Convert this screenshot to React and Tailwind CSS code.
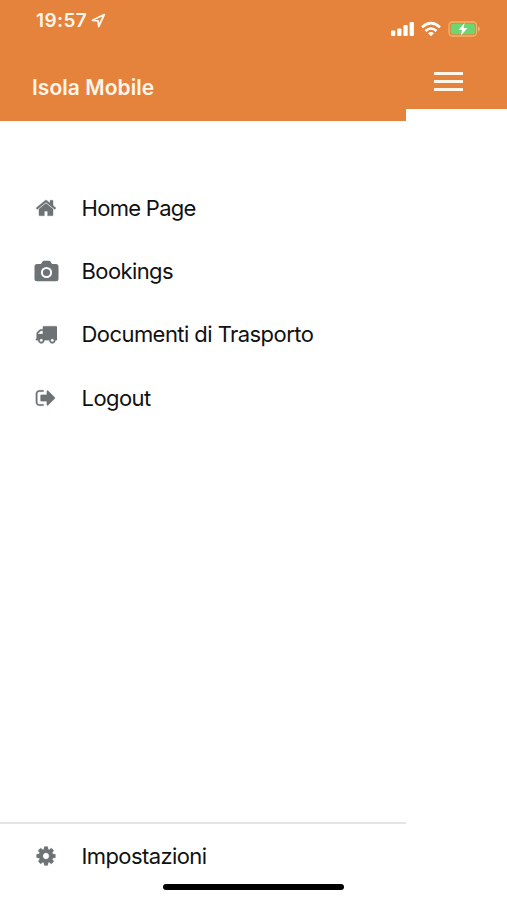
const HOME =
  'M1472 992v480q0 26-19 45t-45 19h-384v-384h-256v384h-384q-26 0-45-19t-19-45v-480q0-1 .5-3t.5-3l575-474 575 474q1 2 1 6zm223-69l-62 74q-8 9-21 11h-3q-13 0-21-7l-692-577-692 577q-12 8-24 7-13-2-21-11l-62-74q-8-10-7-23.5t11-21.5l719-599q32-26 76-26t76 26l244 204v-195q0-14 9-23t23-9h192q14 0 23 9t9 23v408l219 182q10 8 11 21.5t-7 23.5z';
const TRUCK =
  'M640 1408q0-52-38-90t-90-38-90 38-38 90 38 90 90 38 90-38 38-90zm-384-512h384v-256h-158q-13 0-22 9l-195 195q-9 9-9 22v30zm1280 512q0-52-38-90t-90-38-90 38-38 90 38 90 90 38 90-38 38-90zm256-1088v1024q0 15-4 26.5t-13.5 18.5-16.5 11.5-23.5 6-22.5 2-25.5 0-22.5-.5q0 106-75 181t-181 75-181-75-75-181h-384q0 106-75 181t-181 75-181-75-75-181h-64q-3 0-22.5.5t-25.5 0-22.5-2-23.5-6-16.5-11.5-13.5-18.5-4-26.5q0-26 19-45t45-19v-320q0-8-.5-35t0-38 2.5-34.5 6.5-37 14-30.5 22.5-30l198-198q19-19 50.5-32t58.5-13h160v-192q0-26 19-45t45-19h1024q26 0 45 19t19 45z';
const SIGN_OUT =
  'M704 1440q0 4 1 20t.5 26.5-3 23.5-10 19.5-20.5 6.5h-320q-119 0-203.5-84.5t-84.5-203.5v-704q0-119 84.5-203.5t203.5-84.5h320q13 0 22.5 9.5t9.5 22.5q0 4 1 20t.5 26.5-3 23.5-10 19.5-20.5 6.5h-320q-66 0-113 47t-47 113v704q0 66 47 113t113 47h312l11.5 1 11.5 3 8 5.5 7 9 2 13.5zm928-544q0 26-19 45l-544 544q-19 19-45 19t-45-19-19-45v-288h-448q-26 0-45-19t-19-45v-384q0-26 19-45t45-19h448v-288q0-26 19-45t45-19 45 19l544 544q19 19 19 45z';
const COG =
  'M1152 896q0-106-75-181t-181-75-181 75-75 181 75 181 181 75 181-75 75-181zm512-109v222q0 12-8 23t-20 13l-185 28q-19 54-39 91 35 50 107 138 10 12 10 25t-9 23q-27 37-99 108t-94 71q-12 0-26-9l-138-108q-44 23-91 38-16 136-29 186-7 28-36 28h-222q-14 0-24.5-8.5t-11.5-21.5l-28-184q-49-16-90-37l-141 107q-10 9-25 9-14 0-25-11-126-114-165-168-7-10-7-23 0-12 8-23 15-21 51-66.5t54-70.5q-27-50-41-99l-183-27q-13-2-21-12.5t-8-23.5v-222q0-12 8-23t19-13l186-28q14-46 39-92-40-57-107-138-10-12-10-24 0-10 9-23 26-36 98.5-107.5t94.5-71.5q13 0 26 10l138 107q44-23 91-38 16-136 29-186 7-28 36-28h222q14 0 24.5 8.5t11.5 21.5l28 184q49 16 90 37l142-107q9-9 24-9 13 0 25 10 129 119 165 170 7 8 7 22 0 12-8 23-15 21-51 66.5t-54 70.5q26 50 41 98l183 28q13 2 21 12.5t8 23.5z';

function Glyph({ d }) {
  return (
    <svg className="size-[22px]" viewBox="0 0 1792 1792" fill="currentColor">
      <path d={d} stroke="currentColor" strokeWidth="20" />
    </svg>
  );
}

function Camera() {
  return (
    <svg className="h-[22px] w-[25px]" viewBox="0 0 25 22">
      <path
        fill="currentColor"
        d="M3 4h4l1.4-2.3Q9 .7 10 .7h5q1 0 1.6 1L18 4h4q2.5 0 2.5 2.5v12.2q0 2.5-2.5 2.5H3Q.5 21.200.5 18.700V6.500Q.5 4 3 4z"
      />
      <circle cx="12.500" cy="12.500" r="4.600" fill="none" stroke="white" strokeWidth="2" />
    </svg>
  );
}

function Row({ icon, label, className }) {
  return (
    <a className="flex h-[63.2px] items-center">
      <span className="ml-[32.5px] flex w-[27px] justify-center text-[#6d7275]">{icon}</span>
      <span className={`ml-[22px] text-[22px] leading-none whitespace-nowrap ${className}`}>{label}</span>
    </a>
  );
}

export default function App() {
  return (
    <div className="relative flex h-[900px] w-[507px] overflow-hidden bg-white font-['Inter','Liberation_Sans',sans-serif] text-[#111]">
      <aside className="flex w-[406px] flex-col">
        <header className="flex h-[121px] flex-col bg-[#e5823b] text-[#fff6ea]">
          <div className="flex h-10 items-center pl-9">
            <span className="text-[19px] leading-none font-semibold tracking-[0.4px]">19:57</span>
            <svg className="ml-1 size-[15px]" viewBox="0 0 15 15" fill="none" stroke="currentColor" strokeWidth="1.800" strokeLinejoin="round">
              <path d="M13.300 1.500 1.500 7.300l5.700.5.500 5.700z" />
            </svg>
          </div>
          <h1 className="mt-9 pl-8 text-[21px] leading-6 font-semibold tracking-[0.05px]">Isola Mobile</h1>
        </header>
        <nav className="flex flex-1 flex-col pt-[55.4px]">
          <Row icon={<Glyph d={HOME} />} label="Home Page" className="tracking-[-0.7px]" />
          <Row icon={<Camera />} label="Bookings" className="tracking-[-0.6px]" />
          <Row icon={<Glyph d={TRUCK} />} label="Documenti di Trasporto" className="tracking-[-0.56px]" />
          <Row icon={<Glyph d={SIGN_OUT} />} label="Logout" className="tracking-[-0.55px]" />
        </nav>
        <footer className="h-[78px] border-t-2 border-[#e4e4e4]">
          <Row icon={<Glyph d={COG} />} label="Impostazioni" className="tracking-[-0.6px]" />
        </footer>
      </aside>
      <main className="flex-1">
        <div className="flex h-[109px] flex-col bg-[#e5823b] text-[#fff6ea]">
          <div className="-ml-[15px] flex h-[57px] items-center">
            <svg className="h-[16px] w-[23px]" viewBox="0 0 23 16" fill="white">
              <rect x="0" y="9.500" width="4.300" height="5.500" rx="1" />
              <rect x="6.200" y="7.500" width="4.300" height="7.500" rx="1" />
              <rect x="12.400" y="4" width="4.300" height="11" rx="1" />
              <rect x="18.600" y="1" width="4.300" height="14" rx="1" />
            </svg>
            <svg className="ml-[7px] h-[16px] w-[20px]" viewBox="0 0 20 16" fill="none" stroke="white" strokeWidth="2.600">
              <path d="M1 6.200Q10-1.800 19 6.200" />
              <path d="M4.500 10Q10 5 15.500 10" />
              <path d="M7 12.200Q10 9.800 13 12.200L10 15.200z" fill="white" stroke="none" />
            </svg>
            <svg className="ml-[7px] h-[16px] w-[33px]" viewBox="0 0 33 16">
              <rect x="1" y="1" width="27.500" height="14" rx="3.500" fill="none" stroke="#f0b56e" strokeWidth="1.300" />
              <rect x="2.800" y="2.800" width="24" height="10.400" rx="1.800" fill="#6ed670" />
              <path d="M30 5.500q2 .8 2 2.500t-2 2.500z" fill="#f0b56e" />
              <path d="M16.500 2 10.500 9h3.500l-1 5.500L19.500 7h-3.800z" fill="white" />
            </svg>
          </div>
          <div className="mt-[15px] ml-[28px] flex w-[29px] flex-col gap-[5px]">
            <div className="h-[3px] bg-current" />
            <div className="h-[3px] bg-current" />
            <div className="h-[3px] bg-current" />
          </div>
        </div>
      </main>
      <div className="absolute top-[884px] left-[163px] h-[6px] w-[181px] rounded-full bg-black" />
    </div>
  );
}
